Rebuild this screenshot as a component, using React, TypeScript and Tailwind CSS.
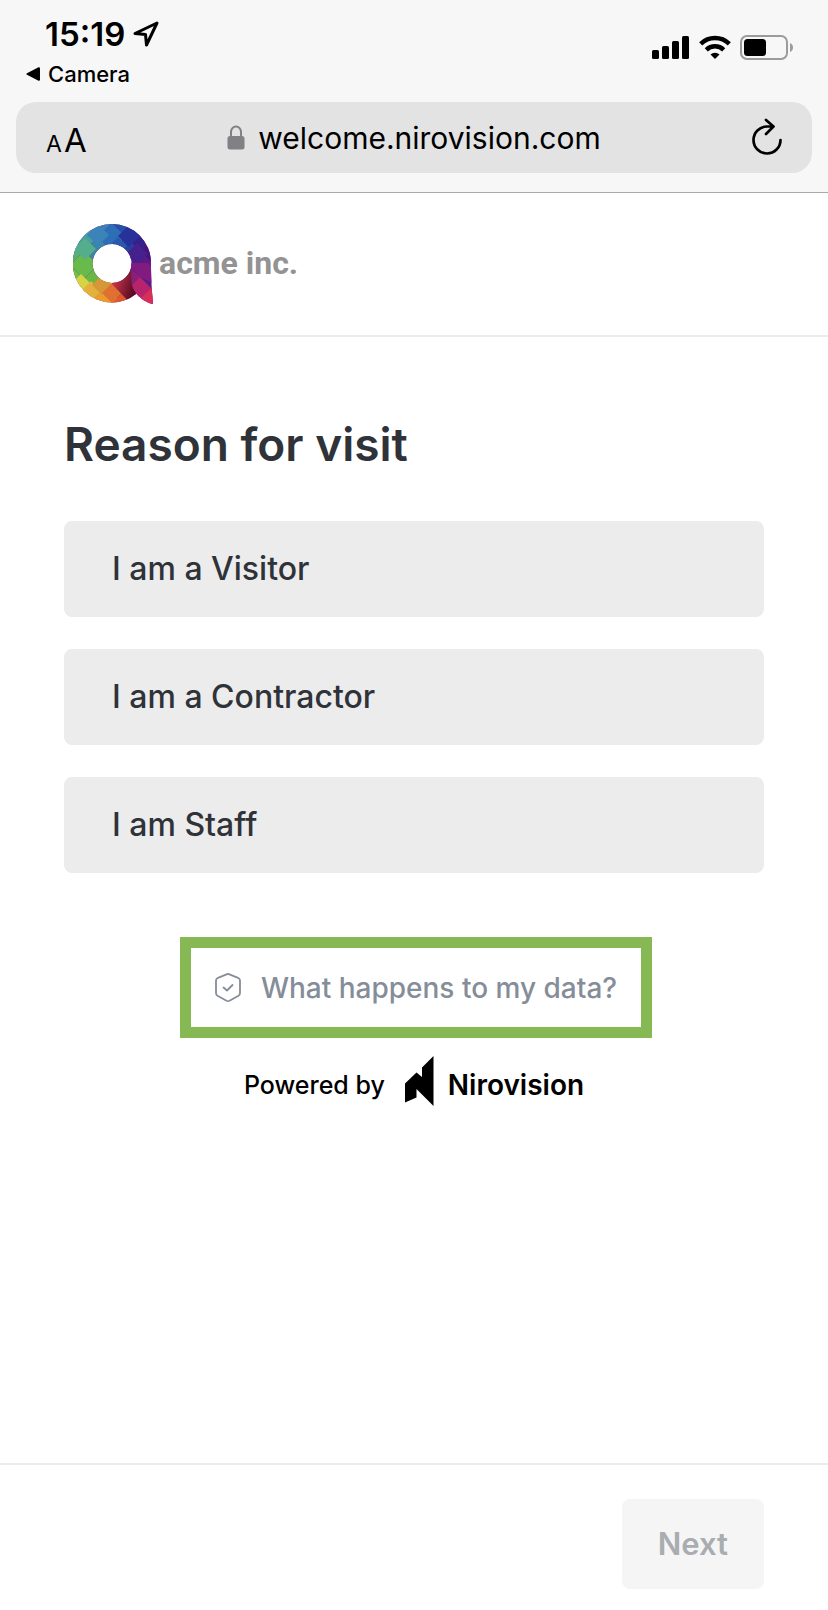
import React, { useState } from 'react';

/**
 * The visit reasons a guest can pick from.
 */
const REASONS = ['I am a Visitor', 'I am a Contractor', 'I am Staff'];

/**
 * Facets of the acme logo, as [centre x, centre y, half diagonal, colour].
 * Later facets are painted over earlier ones; all are clipped to the logo's outline.
 */
const FACETS: [number, number, number, string][] = [
  [25, -1, 14, '#3b80b6'],
  [53, -1, 14, '#2351a6'],
  [11, 13, 14, '#489fa0'],
  [39, 13, 14, '#2c6fb6'],
  [67, 13, 14, '#33208a'],
  [-3, 27, 14, '#58b077'],
  [25, 27, 14, '#3b86a6'],
  [53, 27, 14, '#27419f'],
  [81, 27, 14, '#46147a'],
  [11, 41, 14, '#68bb4b'],
  [-3, 55, 14, '#74bf45'],
  [25, 55, 14, '#69b845'],
  [25, 11, 11, '#3b83b8'],
  [12, 25, 11, '#54ae8c'],
  [56, 12, 11, '#28309a'],
  [45, 22, 9, '#2a58ae'],
  [64, 30, 11, '#46208c'],
  [8, 60, 10, '#d6d345'],
  [18, 67, 10, '#e3b13c'],
  [28, 77, 10, '#eb9c30'],
  [29, 61, 10, '#d69736'],
  [39, 69, 10, '#e0702f'],
  [49, 79, 10, '#dc5a2c'],
];

const AcmeLogo = () => (
  <svg width="81" height="81" viewBox="0 0 81 81" aria-hidden="true">
    <defs>
      <clipPath id="ring">
        <path clipRule="evenodd" d="M39 0a39 39 0 1 0 0 78.500a39 39 0 0 0 24-8.500L78 39A39 39 0 0 0 39 0ZM39 20a19.500 19.500 0 1 1 0 39a19.500 19.500 0 0 1 0-39Z" />
      </clipPath>
      <clipPath id="tail">
        <path d="M58.500 39H78C78 56 79 68 80 80C70 78 58.500 68 58.500 57Z" />
      </clipPath>
      <linearGradient id="shade" x1="41" y1="62" x2="60" y2="68" gradientUnits="userSpaceOnUse">
        <stop offset="0" stopColor="#bf3148" />
        <stop offset="1" stopColor="#5a0d22" />
      </linearGradient>
    </defs>
    <g clipPath="url(#ring)">
      <rect width="81" height="81" fill="#5a1a86" />
      <rect y="58" width="44" height="23" fill="#e6a436" />
      {FACETS.map(([x, y, r, fill]) => (
        <path key={`${x},${y}`} d={`M${x} ${y - r}L${x + r} ${y}L${x} ${y + r}L${x - r} ${y}Z`} fill={fill} />
      ))}
      <path d="M39 59L59 44V60L66 70L57 79L39 60Z" fill="url(#shade)" />
    </g>
    <g clipPath="url(#tail)">
      <rect x="55" y="36" width="26" height="45" fill="#5c1a88" />
      <path d="M67 31L81 45V60L67 53L56 42Z" fill="#821b80" />
      <path d="M55 42L67 53L55 65Z" fill="#8a1f78" />
      <path d="M67 53L81 67V81H55V65Z" fill="#b8246b" />
      <path d="M55 62L68 74L81 62V81H55Z" fill="#d62f58" />
    </g>
  </svg>
);

const StatusBar = () => (
  <div className="flex justify-between pl-6 pr-[34px]">
    <div>
      <div className="flex items-center gap-2 pl-[21px] pt-[14px]">
        <span className="text-[33px] leading-10 font-semibold">15:19</span>
        <svg width="26" height="26" viewBox="0 0 26 26" fill="none" stroke="currentColor" strokeWidth="3" strokeLinejoin="round" aria-hidden="true">
          <path d="M24 2L2 12.500L12.500 13.500L13.500 24Z" />
        </svg>
      </div>
      <a href="#camera" className="mt-1 flex items-center gap-2 pl-[2px] text-[22px] leading-8 font-medium">
        <svg width="14" height="14" viewBox="0 0 14 14" aria-hidden="true">
          <path d="M1 6.200L12.500 0.300Q14 0 14 1.500V12.500Q14 14 12.500 13.700L1 7.800Q-0.300 7 1 6.200Z" />
        </svg>
        Camera
      </a>
    </div>
    <div className="flex items-start gap-[9px] pt-[35px]">
      <svg width="38" height="25" viewBox="0 0 38 25" aria-hidden="true">
        <rect x="0" y="15" width="7" height="9" rx="1.500" />
        <rect x="10" y="11" width="7" height="13" rx="1.500" />
        <rect x="20" y="6" width="7" height="18" rx="1.500" />
        <rect x="30" y="1" width="7" height="23" rx="1.500" />
      </svg>
      <svg width="32" height="25" viewBox="0 0 32 25" fill="none" stroke="currentColor" strokeWidth="4.500" aria-hidden="true">
        <path d="M1.700 8.800A20.500 20.500 0 0 1 30.300 8.800M7.300 14.800A12.500 12.500 0 0 1 24.700 14.800" />
        <path d="M16 24L11.500 19.500A6.500 6.500 0 0 1 20.500 19.500Z" fill="currentColor" stroke="none" />
      </svg>
      <svg width="54" height="25" viewBox="0 0 54 25" aria-hidden="true">
        <rect x="1" y="1" width="46" height="23" rx="6" fill="none" stroke="#9b9b9b" strokeWidth="2" />
        <rect x="4" y="4" width="22" height="17" rx="3.500" />
        <path d="M50 8Q53 9.500 53 12.500T50 17Z" fill="#9b9b9b" />
      </svg>
    </div>
  </div>
);

const AddressBar = () => (
  <div className="mx-4 mt-[12px] grid h-[71px] grid-cols-[1fr_auto_1fr] items-center rounded-[20px] bg-[#e3e3e3] px-[30px]">
    <button type="button" aria-label="Text size" className="flex items-baseline gap-[2px] justify-self-start pt-2 leading-10">
      <span className="text-[23px]">A</span>
      <span className="text-[33px]">A</span>
    </button>
    <div className="flex items-center gap-[13px]">
      <svg width="18" height="25" viewBox="0 0 18 25" fill="none" stroke="#808085" aria-hidden="true">
        <path d="M4 12V7A5 5.500 0 0 1 14 7V12" strokeWidth="2" />
        <rect x="0.500" y="11" width="17" height="13.500" rx="2.500" fill="#808085" stroke="none" />
      </svg>
      <span className="text-[30px] leading-10">welcome.nirovision.com</span>
    </div>
    <button type="button" aria-label="Reload" className="justify-self-end pb-[2px]">
      <svg width="30" height="38" viewBox="0 0 30 38" fill="none" stroke="currentColor" strokeWidth="2.700" strokeLinecap="round" strokeLinejoin="round" aria-hidden="true">
        <path d="M28.500 22A13.500 13.500 0 1 1 15 8.500H21M14 2L21.500 8.500L14 16" />
      </svg>
    </button>
  </div>
);

/**
 * The check-in page: a guest picks the reason for the visit before moving on.
 */
const App: React.FC = () => {
  const [reason, setReason] = useState<string | null>(null);

  return (
    <div className="flex min-h-screen flex-col bg-white font-['Inter',sans-serif] text-black">
      <div className="border-b border-[#a9a9a9] bg-[#f7f7f7] pb-[19px]">
        <StatusBar />
        <AddressBar />
      </div>

      <header className="flex items-center gap-[5px] border-b-2 border-[#ebebeb] px-[73px] pt-[31px] pb-[30px]">
        <AcmeLogo />
        <span className="pb-1 font-['Roboto',sans-serif] text-[32px] leading-10 font-bold text-[#939393]">acme inc.</span>
      </header>

      <main className="flex grow flex-col px-16 pt-[75px]">
        <h1 className="text-[46px] leading-[64px] font-semibold text-[#2f3339]">Reason for visit</h1>
        <div className="mt-[45px] flex flex-col gap-8">
          {REASONS.map((label) => (
            <button
              key={label}
              type="button"
              onClick={() => setReason(label)}
              className={`h-24 rounded-lg px-12 text-left text-[32px] font-medium text-[#2f3339] ${reason === label ? 'bg-[#dcdcdc]' : 'bg-[#ececec]'}`}
            >
              {label}
            </button>
          ))}
        </div>

        <div className="mt-16 flex flex-col items-center">
          <a href="#data" className="ml-1 flex h-[101px] items-center gap-5 border-[11px] border-[#86b854] px-6 text-[28px] font-medium text-[#858d98]">
            <svg width="26" height="29" viewBox="0 0 26 29" fill="none" stroke="currentColor" strokeWidth="1.800" strokeLinecap="round" strokeLinejoin="round" aria-hidden="true">
              <path d="M11.500 1.300Q13 0.700 14.500 1.300L23 4.800Q25 5.700 25 7.500V20Q25 21.800 23.500 22.800L14.500 27.700Q13 28.400 11.500 27.700L2.500 22.800Q1 21.800 1 20V7.500Q1 5.700 3 4.800Z" />
              <path d="M8.500 14.500L12 17.500L17.500 12" />
            </svg>
            What happens to my data?
          </a>
          <div className="mt-[18px] flex items-center">
            <span className="pt-2 text-[25px] leading-8 font-medium">Powered by</span>
            <svg className="ml-5 mr-[14px]" width="29" height="50" viewBox="0 0 29 50" aria-hidden="true">
              <path d="M0 27.500L11.500 16.500L17 21V11.500L28.500 0V50L11.500 33V41.500L0 46.500Z" />
            </svg>
            <span className="pt-2 text-[28px] leading-8 font-semibold">Nirovision</span>
          </div>
        </div>
      </main>

      <footer className="flex justify-end border-t-2 border-[#ebebeb] px-16 pt-[34px] pb-[21px]">
        <button type="button" disabled={!reason} className="h-[90px] rounded-lg bg-[#f5f5f5] px-9 text-[31px] font-semibold text-[#a9acb1]">
          Next
        </button>
      </footer>
    </div>
  );
};

export default App;
